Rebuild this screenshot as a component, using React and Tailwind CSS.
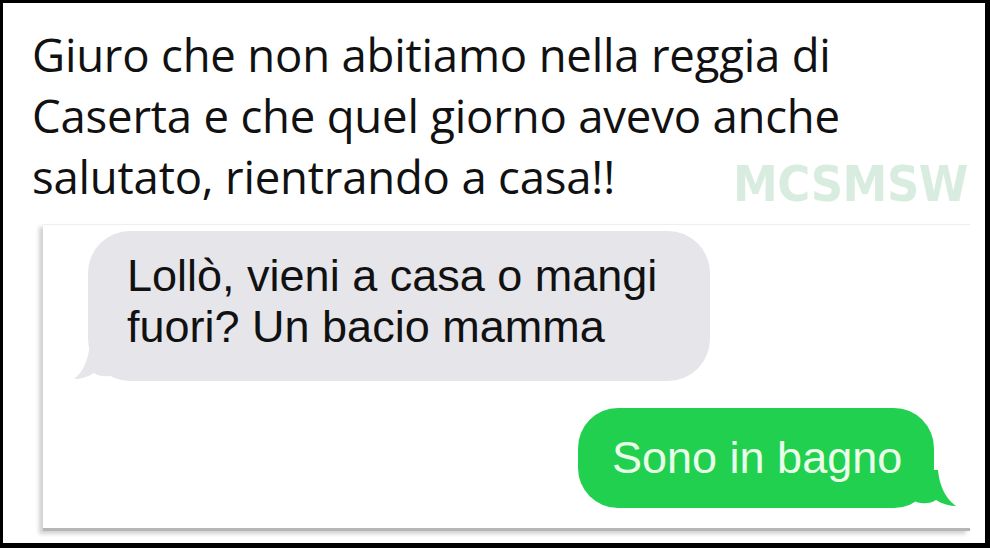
import React from 'react';

const Title = () => (
    <div className="pl-[29px] pt-[21px] text-[45.5px] leading-[61px] text-[#111] font-['Open_Sans',sans-serif] tracking-[-0.2px]">
        <div>Giuro che non abitiamo nella reggia di</div>
        <div>Caserta e che quel giorno avevo anche</div>
        <div>salutato, rientrando a casa!!</div>
    </div>
);

const App = () => {
    return (
        <div className="w-[990px] h-[548px] bg-black pt-[3px] pl-[3px] pr-[5px] pb-[5px]">
            <div className="relative h-full bg-white overflow-hidden">
                <Title />

                {/* watermark */}
                <div className="absolute left-[730px] top-[156px] text-[50px] leading-none font-bold tracking-[-0.5px] text-[#d8ede0] font-['DejaVu_Sans_Condensed','DejaVu_Sans',sans-serif]">
                    MCSMSW
                </div>

                {/* screenshot card */}
                <div className="ml-[40px] mt-[17px] w-[927px] h-[307px] bg-white border-t border-[#eee] shadow-[-4px_3px_4px_rgba(0,0,0,0.18)] relative">
                    <div className="absolute left-0 right-0 bottom-0 h-[3px] bg-[#b5b5b5]"></div>

                    <div className="pt-[6px] pl-[45px]">
                        <div className="relative w-[622px] h-[150px] rounded-[42px] bg-[#e5e5ea] pl-[39px] pt-[19px] text-[45px] leading-[51px] text-[#111] font-['Liberation_Sans',sans-serif]">
                            <svg className="absolute left-[-14px] bottom-[-2px]" width="40" height="40" viewBox="0 0 40 40">
                                <path d="M16 0 L40 0 L40 32 C32 34 26 34 20 30 C14 34 6 36 0 36 C8 30 14 20 16 0 Z" fill="#e5e5ea" />
                            </svg>
                            <div className="relative">Lollò, vieni a casa o mangi</div>
                            <div className="relative">fuori? Un bacio mamma</div>
                        </div>
                    </div>

                    <div className="flex justify-end pr-[36px] mt-[27px]">
                        <div className="relative w-[356px] h-[100px] rounded-[40px] bg-[#22d04f] flex items-center pl-[34px] text-[45px] text-[#eaffea] font-['Liberation_Sans',sans-serif]">
                            <svg className="absolute right-[-22px] bottom-[-2px]" width="40" height="40" viewBox="0 0 40 40">
                                <path d="M22 0 L0 0 L0 32 C8 34 14 34 20 30 C26 34 34 36 40 36 C32 30 24 20 22 0 Z" fill="#22d04f" />
                            </svg>
                            <span className="relative">Sono in bagno</span>
                        </div>
                    </div>
                </div>
            </div>
        </div>
    );
};

export default App;
